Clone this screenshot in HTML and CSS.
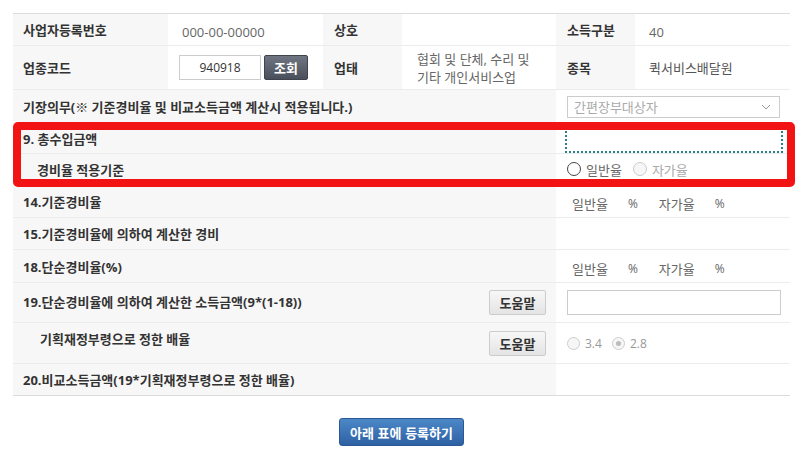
FILE: index.html
```html
<!DOCTYPE html>
<html lang="ko">
<head>
    <meta charset="UTF-8">
    <title>비교소득금액 계산</title>
    <link rel="stylesheet" href="styles.css">
</head>

<body>
    <div class="page">
        <div class="sheet">
            <div class="info-row first">
                <div class="label">사업자등록번호</div>
                <div class="value"><span class="num muted">000-00-00000</span></div>
                <div class="label">상호</div>
                <div class="value"></div>
                <div class="label">소득구분</div>
                <div class="value"><span class="num">40</span></div>
            </div>
            <div class="info-row tall">
                <div class="label">업종코드</div>
                <div class="value with-input">
                    <input class="code-input" type="text" value="940918">
                    <button class="btn-dark">조회</button>
                </div>
                <div class="label">업태</div>
                <div class="value wrap">협회 및 단체, 수리 및 기타 개인서비스업</div>
                <div class="label">종목</div>
                <div class="value dark">퀵서비스배달원</div>
            </div>

            <div class="calc-row row-head">
                <div class="calc-label">기장의무(※ 기준경비율 및 비교소득금액 계산시 적용됩니다.)</div>
                <div class="calc-value">
                    <div class="select">
                        <span>간편장부대상자</span>
                        <svg width="10" height="6" viewBox="0 0 10 6"><polyline points="1,1 5,5 9,1" fill="none" stroke="#999" stroke-width="1"/></svg>
                    </div>
                </div>
            </div>
            <div class="calc-row row-income">
                <div class="calc-label">9. 총수입금액</div>
                <div class="calc-value">
                    <input class="text-input focused" type="text">
                </div>
            </div>
            <div class="calc-row row-basis">
                <div class="calc-label indent">경비율 적용기준</div>
                <div class="calc-value">
                    <span class="radio"></span><span class="radio-text">일반율</span>
                    <span class="radio off"></span><span class="radio-text off">자가율</span>
                </div>
            </div>
            <div class="calc-row row-rate">
                <div class="calc-label">14.기준경비율</div>
                <div class="calc-value rates">
                    <span>일반율</span><span class="pct">%</span><span>자가율</span><span class="pct">%</span>
                </div>
            </div>
            <div class="calc-row">
                <div class="calc-label">15.기준경비율에 의하여 계산한 경비</div>
                <div class="calc-value"></div>
            </div>
            <div class="calc-row row-rate">
                <div class="calc-label">18.단순경비율(%)</div>
                <div class="calc-value rates">
                    <span>일반율</span><span class="pct">%</span><span>자가율</span><span class="pct">%</span>
                </div>
            </div>
            <div class="calc-row row-help">
                <div class="calc-label">
                    <span class="label-text">19.단순경비율에 의하여 계산한 소득금액(9*(1-18))</span>
                    <button class="btn-help">도움말</button>
                </div>
                <div class="calc-value">
                    <input class="text-input" type="text">
                </div>
            </div>
            <div class="calc-row row-help-lg">
                <div class="calc-label indent-lg">
                    <span class="label-text raised">기획재정부령으로 정한 배율</span>
                    <button class="btn-help">도움말</button>
                </div>
                <div class="calc-value">
                    <span class="radio small off"></span><span class="radio-text num-sm">3.4</span>
                    <span class="radio small off checked"></span><span class="radio-text num-sm">2.8</span>
                </div>
            </div>
            <div class="calc-row">
                <div class="calc-label">20.비교소득금액(19*기획재정부령으로 정한 배율)</div>
                <div class="calc-value"></div>
            </div>
        </div>

        <div class="actions">
            <button class="btn-submit">아래 표에 등록하기</button>
        </div>

        <!-- 강조 표시 -->
        <div class="highlight"></div>
    </div>
</body>
</html>
```

FILE: styles.css
```css
* {
    box-sizing: border-box;
}

body {
    margin: 0;
    font-family: "Open Sans", "Noto Sans CJK KR", sans-serif;
    font-size: 13px;
    color: #333;
    background-color: #fff;
}

.page {
    position: relative;
    padding: 13px 0 0 13px;
}

.sheet {
    width: 777px;
    border-top: 1px solid #dcdcdc;
    border-bottom: 1px solid #dcdcdc;
}

/* 상단 기본정보 */
.info-row {
    display: grid;
    grid-template-columns: 155px 155px 79px 154px 79px 1fr;
    height: 44px;
    border-top: 1px solid #ececec;
}

.info-row.first {
    height: 31px;
    border-top: 0;
}

.label, .value {
    display: flex;
    align-items: center;
}

.label {
    background-color: #f7f7f7;
    font-weight: bold;
    padding: 0 11px;
}

.info-row .label:first-child {
    padding-left: 10px;
}

.value {
    padding: 0 14px;
    color: #666;
}

.value.dark {
    color: #555;
}

.value.wrap {
    line-height: 18px;
    padding: 0 10px 0 15px;
    word-break: keep-all;
}

.value.with-input {
    padding-left: 11px;
    gap: 3px;
}

.num {
    padding-top: 4px;
}

.muted {
    color: #666;
}

.code-input {
    width: 82px;
    height: 25px;
    border: 1px solid #ccc;
    font-family: "Open Sans", sans-serif;
    font-size: 12px;
    color: #333;
    text-align: center;
    padding: 0;
}

.btn-dark {
    width: 44px;
    height: 25px;
    border: 1px solid #3e434c;
    border-radius: 2px;
    background: linear-gradient(#6f7581, #4a505b);
    color: #fff;
    font-family: "Noto Sans CJK KR", sans-serif;
    font-weight: bold;
    font-size: 13px;
    padding: 0;
}

/* 계산 항목 */
.calc-row {
    display: grid;
    grid-template-columns: 543px 1fr;
    height: 32px;
    border-top: 1px solid #ececec;
}

.calc-row.row-head {
    height: 34px;
}

.calc-row.row-income {
    height: 30px;
}

.calc-row.row-basis {
    height: 31px;
}

.calc-row.row-rate {
    height: 33px;
}

.calc-row.row-help {
    height: 40px;
}

.calc-row.row-help-lg {
    height: 41px;
}

.calc-label {
    display: flex;
    align-items: center;
    justify-content: space-between;
    background-color: #f7f7f7;
    font-weight: bold;
    padding: 0 10px 0 10px;
}

.calc-label.indent {
    padding-left: 24px;
}

.calc-label.indent-lg {
    padding-left: 27px;
}

.label-text {
    margin-bottom: 3px;
}

.label-text.raised {
    margin-bottom: 9px;
}

.calc-value {
    display: flex;
    align-items: center;
    padding: 0 9px 0 11px;
    color: #666;
}

.select {
    width: 213px;
    height: 22px;
    border: 1px solid #ccc;
    display: flex;
    align-items: center;
    justify-content: space-between;
    padding: 0 8px 0 6px;
    color: #aaa;
}

.text-input {
    width: 214px;
    height: 25px;
    border: 1px solid #ccc;
    padding: 0 6px;
}

.text-input.focused {
    height: 22px;
    border: 0;
    outline: 2px dotted #2b7f86;
    margin-top: 2px;
}

.radio {
    width: 14px;
    height: 14px;
    border: 1px solid #444;
    border-radius: 50%;
    background-color: #fff;
    position: relative;
}

.radio.off {
    border-color: #ccc;
    background-color: #f6f6f6;
}

.radio.small {
    width: 13px;
    height: 13px;
}

.radio.checked::after {
    content: "";
    position: absolute;
    left: 3px;
    top: 3px;
    width: 5px;
    height: 5px;
    border-radius: 50%;
    background-color: #bbb;
}

.radio-text {
    margin: 0 11px 0 5px;
    color: #666;
}

.radio-text.off {
    color: #aaa;
}

.radio-text.num-sm {
    font-size: 12px;
    color: #999;
    margin-right: 10px;
}

.rates {
    padding-left: 16px;
    padding-top: 4px;
}

.rates span {
    margin-right: 20px;
}

.rates .pct {
    font-size: 12px;
    margin-right: 21px;
}

.btn-help {
    width: 57px;
    height: 25px;
    border: 1px solid #ccc;
    border-radius: 2px;
    background: linear-gradient(#f7f7f7, #e4e4e4);
    color: #333;
    font-family: "Noto Sans CJK KR", sans-serif;
    font-weight: bold;
    font-size: 13px;
    padding: 0;
}

/* 등록 버튼 */
.actions {
    width: 777px;
    margin-top: 22px;
    text-align: center;
}

.btn-submit {
    width: 125px;
    height: 28px;
    border: 1px solid #2a5996;
    border-radius: 3px;
    background: linear-gradient(#4c88c8, #2e61a4);
    color: #fff;
    font-family: "Noto Sans CJK KR", sans-serif;
    font-weight: bold;
    font-size: 13px;
    padding: 0;
}

.highlight {
    position: absolute;
    left: 13px;
    top: 122px;
    width: 782px;
    height: 65px;
    border: 8px solid #f21414;
    border-radius: 5px;
    pointer-events: none;
}
```
